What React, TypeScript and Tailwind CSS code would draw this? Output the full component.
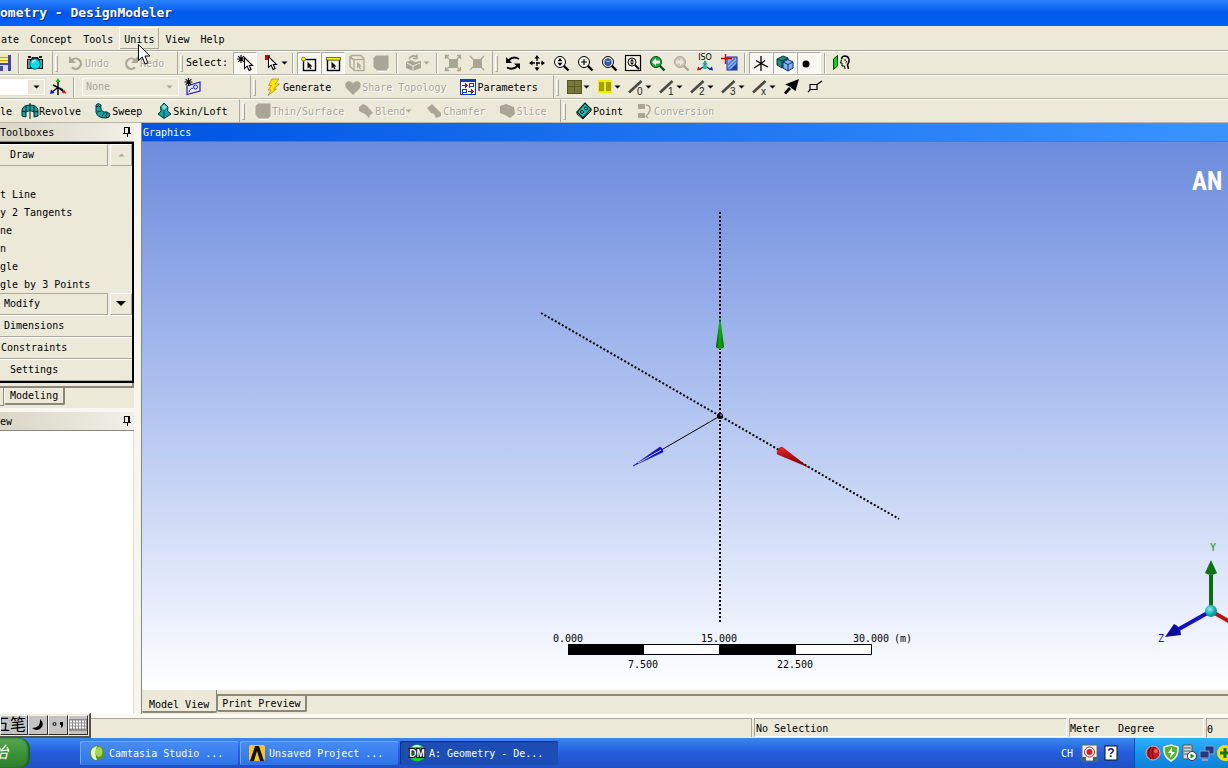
import React from "react";

const FONT = "font-['DejaVu_Sans_Mono','Noto_Sans_CJK_SC',monospace]";

/* ---------- icons (18 x 18 grid) ---------- */

function Svg({ children, crisp }: { children: React.ReactNode; crisp?: boolean }) {
  return (
    <svg
      className="h-[18px] w-[18px] shrink-0 overflow-visible"
      viewBox="0 0 18 18"
      fill="none"
      aria-hidden="true"
      shapeRendering={crisp ? "crispEdges" : "auto"}
    >
      {children}
    </svg>
  );
}

const Pointer = ({ x = 0, y = 0, s = 1 }: { x?: number; y?: number; s?: number }) => (
  <path
    transform={`translate(${x} ${y}) scale(${s})`}
    d="M0 0 L0 11 L2.6 8.6 L4.6 13 L6.6 12 L4.8 8 L8 8 Z"
    fill="#fff"
    stroke="#000"
    strokeWidth="1.1"
  />
);

const Save = () => (
  <Svg crisp>
    <path d="M1 1H17V17H3L1 15Z" fill="#4343a8" />
    <rect x="4" y="1" width="10" height="8" fill="#f5e9a0" />
    <path d="M4 3H14M4 6H14" stroke="#c8a000" />
    <rect x="5" y="11" width="9" height="6" fill="#d8d8ec" />
    <rect x="6" y="12" width="3" height="5" fill="#4343a8" />
  </Svg>
);
const Camera = () => (
  <Svg>
    <path d="M1 5H5L6 3H12L13 5H17V15H1Z" fill="#16181c" />
    <path d="M2 3h3M13 3h3" stroke="#16181c" strokeWidth="2" />
    <rect x="2" y="6" width="2" height="8" fill="#7d9598" />
    <rect x="14" y="6" width="2" height="8" fill="#7d9598" />
    <circle cx="9" cy="10" r="5.2" fill="#00e0ea" stroke="#046a70" />
    <path d="M6.5 9a3 3 0 0 1 3-2.5" stroke="#d8ffff" strokeWidth="1.3" />
  </Svg>
);
const Undo = () => (
  <Svg>
    <path d="M5 6a5.2 5.2 0 1 1 0 7.4" stroke="#a9a698" strokeWidth="2.2" />
    <path d="M2 2V9H9Z" fill="#a9a698" />
  </Svg>
);
const Redo = () => (
  <Svg>
    <path d="M13 6a5.2 5.2 0 1 0 0 7.4" stroke="#a9a698" strokeWidth="2.2" />
    <path d="M16 2V9H9Z" fill="#a9a698" />
  </Svg>
);
const NewSelect = () => (
  <Svg>
    <path d="M5 1V9M1 5H9M2.2 2.2L7.8 7.8M7.8 2.2L2.2 7.8" stroke="#000" strokeWidth="1.1" />
    <Pointer x={8.5} y={3.5} />
  </Svg>
);
const SelectMode = () => (
  <Svg>
    <rect x="2" y="1" width="5" height="5" fill="#d00010" />
    <Pointer x={5.5} y={2.5} />
  </Svg>
);
const FilterFrame = () => (
  <>
    <rect x="3.5" y="5.5" width="12" height="11" stroke="#000" strokeWidth="1.4" />
    <path d="M7.5 7.5v7l1.8-1.5 1 2.5 1.2-.6-1-2.3h2z" fill="#000" />
  </>
);
const FilterPoint = () => (
  <Svg>
    <FilterFrame />
    <circle cx="3.5" cy="5" r="2" fill="#f5f500" stroke="#777700" strokeWidth="0.8" />
  </Svg>
);
const FilterEdge = () => (
  <Svg>
    <FilterFrame />
    <rect x="2.5" y="3.5" width="14" height="2.6" fill="#f5f500" stroke="#555500" strokeWidth="0.8" />
  </Svg>
);
const FilterFace = () => (
  <Svg>
    <path d="M5.500 5.500L2 3V12.500L5.500 15.500M2 3L4 1.500H13L16 5" stroke="#aeab9c" strokeWidth="1.600" />
    <rect x="6" y="5.5" width="10" height="11" stroke="#aeab9c" strokeWidth="1.4" />
    <path d="M9 7.5v7l1.8-1.5 1 2.5 1.2-.6-1-2.3h2z" fill="#aeab9c" />
  </Svg>
);
const SolidBox = () => (
  <Svg>
    <path d="M1.5 4L4 1.5H16.5V14L14.5 16.5H5L1.5 13Z" fill="#a9a698" />
    <path d="M5 17.5H15L17.5 14.5" stroke="#fff" />
  </Svg>
);
const ExtendSel = () => (
  <Svg>
    <path d="M1 8L6 6L10 8L16 7V14L8 17L1 14Z" fill="#a9a698" />
    <path d="M2 9l6 3 7-3M8 12v5" stroke="#ece9d8" />
    <path d="M4 5Q7 0 12 3M12 .5v4h-4" stroke="#a9a698" strokeWidth="1.5" />
  </Svg>
);
const Expand = () => (
  <Svg>
    <rect x="5" y="5" width="9" height="9" fill="#a9a698" />
    <path d="M1.5 5V1.5H5M13 1.5H16.5V5M16.5 13V16.5H13M5 16.5H1.5V13M2 2l3 3M16 2l-3 3M2 16l3-3M16 16l-3-3" stroke="#a9a698" strokeWidth="1.3" />
  </Svg>
);
const Shrink = () => (
  <Svg>
    <rect x="5" y="5" width="9" height="9" fill="#a9a698" />
    <path d="M2 2l4 4M16 2l-4 4M2 16l4-4M16 16l-4-4" stroke="#a9a698" strokeWidth="1.3" />
  </Svg>
);
const Rotate = () => (
  <Svg>
    <path d="M4.500 6.500Q9 1.500 15 5M13.500 12Q9 16.500 3 13.500" stroke="#000" strokeWidth="1.900" />
    <path d="M2 3V9H8Z M16 15.500V9.500H10Z" fill="#000" />
  </Svg>
);
const Pan = () => (
  <Svg>
    <path d="M9 3V15M3 9H15" stroke="#000" strokeWidth="1.3" strokeDasharray="4 1" />
    <path d="M9 1L11.500 4.500H6.500ZM9 17L11.500 13.500H6.500ZM1 9L4.500 6.500V11.500ZM17 9L13.500 6.500V11.500Z" fill="#000" />
  </Svg>
);
const Lens = ({ children, color = "#f8f7f0", handle = "#000" }: { children?: React.ReactNode; color?: string; handle?: string }) => (
  <Svg>
    <path d="M11.500 11.500L16.500 16.500" stroke={handle} strokeWidth="2.4" />
    <circle cx="8" cy="8" r="5.500" fill={color} stroke={handle} strokeWidth="1" />
    {children}
  </Svg>
);
const ZoomDrag = () => (
  <Lens>
    <path d="M8 4L10.500 7.300H5.500ZM8 12L10.500 8.700H5.500Z" fill="#000" />
  </Lens>
);
const ZoomIn = () => (
  <Lens>
    <path d="M8 5V11M5 8H11" stroke="#000" strokeWidth="1.2" />
  </Lens>
);
const ZoomFit = () => (
  <Lens>
    <path d="M5 6L8 4.500L11 6V10L8 12L5 10Z" fill="#2c5cd0" stroke="#0a2470" strokeWidth="0.8" />
    <path d="M5.500 6.500l2.500 1.300 2.500-1.300" stroke="#9fc0ff" />
  </Lens>
);
const ZoomBox = () => (
  <Svg>
    <rect x="1.500" y="1.500" width="15" height="15" stroke="#000" strokeWidth="1.2" fill="#f4f2e6" />
    <circle cx="8" cy="8" r="4" stroke="#000" />
    <path d="M11 11l4 4" stroke="#000" strokeWidth="2" />
    <path d="M8 5l2 2.500H6zM8 11l2-2.500H6z" fill="#000" />
  </Svg>
);
const ZoomPrev = () => (
  <Lens color="#18a838" handle="#0a4a14">
    <path d="M4 8L8 4V6.500H12V9.500H8V12Z" fill="#fff" />
  </Lens>
);
const ZoomNext = () => (
  <Lens color="#c9c6b8" handle="#a9a698">
    <path d="M12 8L8 4V6.500H4V9.500H8V12Z" fill="#ece9d8" />
  </Lens>
);
const Iso = () => (
  <Svg>
    <text x="9" y="5.500" fontSize="8" textAnchor="middle" fill="#000" className="font-['DejaVu_Sans',sans-serif]">ISO</text>
    <path d="M9 7V12M9 12L4 15M9 12L14 15" stroke="#111" strokeWidth="1.2" />
    <path d="M9 6.500l3 4H6z" fill="#10b0a0" />
    <path d="M1 16.500l1-4 3.500 3z" fill="#d01020" />
    <path d="M17 16.500l-1-4-3.500 3z" fill="#1020d0" />
    <circle cx="9" cy="13" r="2.300" fill="#10c0c0" />
  </Svg>
);
const LookAt = () => (
  <Svg>
    <rect x="7" y="3" width="10" height="13" fill="#8db2f4" stroke="#12308c" />
    <path d="M10 16L17 9V16Z" fill="#1b3fb0" />
    <path d="M8 11l7-7M8 15L16 7" stroke="#4a74d8" strokeWidth="1.2" />
    <path d="M5.500 0V10M1 4.500H12" stroke="#c00010" strokeWidth="1.3" />
  </Svg>
);
const AxisView = () => (
  <Svg>
    <path d="M9 2V17M2 14L9 9.500L16 13M4 6.500l5 3 4-3" stroke="#000" strokeWidth="1.3" />
  </Svg>
);
const Cubes = () => (
  <Svg>
    <path d="M1 5L7 2L12 4V11L6 14L1 11Z" fill="#1c8f78" stroke="#063c34" />
    <path d="M1 5l5 2 6-3M6 7v7" stroke="#063c34" />
    <path d="M7 8L12 5.500L17 8V14L12 17L7 14Z" fill="#7fb2ee" stroke="#102c80" />
    <path d="M7 8l5 2.500L17 8M12 10.500V17" stroke="#102c80" />
  </Svg>
);
const Dot = () => (
  <Svg>
    <circle cx="6" cy="10" r="3.500" fill="#000" />
  </Svg>
);
const LookFace = () => (
  <Svg>
    <path d="M1.500 5L5.500 1.500V12L1.500 15.500Z" fill="#12d012" stroke="#064006" />
    <path d="M9.500 5Q10 2 13 2Q17.500 2.500 17 7.500L15.500 11L16.500 15" stroke="#000" strokeWidth="1.500" />
    <path d="M9.500 5.500L8.500 9H10V12H12.500L13 15M12 6h2M13.500 9q2-1 1-2" stroke="#000" />
  </Svg>
);
const AxisColor = () => (
  <Svg>
    <path d="M9 4V17M3 14L9 9.500L15 14M4 7l10 5" stroke="#000" strokeWidth="1.400" />
    <path d="M9 0l2.500 4H6.500z" fill="#00c020" />
    <path d="M1 16l1-4.500 3.500 3.500z" fill="#1010e0" />
    <path d="M17.500 15.500l-4.500-.5 2-3.500z" fill="#e01010" />
  </Svg>
);
const NewSketch = () => (
  <Svg>
    <path d="M3 8L16 4V13L3 16.500Z" stroke="#1a1ae0" strokeWidth="1.200" />
    <path d="M5 14c1-3 3-5 4-3" stroke="#1a1ae0" />
    <circle cx="11.500" cy="9" r="2" stroke="#1a1ae0" />
    <path d="M4.500 0V8M.5 4H8.500M1.700 1.200L7.300 6.800M7.300 1.200L1.700 6.800" stroke="#000" strokeWidth="1.100" />
  </Svg>
);
const Bolt = () => (
  <Svg>
    <path d="M7 1H14L10 6H14.500L8.500 11H11.500L3 17.500L6 12H3L6.500 7.500H3.500Z" fill="#ffe600" stroke="#a88a00" strokeWidth="0.700" />
  </Svg>
);
const Heart = () => (
  <Svg>
    <path d="M9 17L2 10Q0 5 3.500 3.500Q7 2.500 9 5.500Q11 2.500 14.500 3.500Q18 5 16 10Z" fill="#a9a698" />
  </Svg>
);
const ParamIcon = () => (
  <Svg crisp>
    <rect x="1.500" y="1.500" width="15" height="15" fill="#fff" stroke="#0c3cc0" />
    <rect x="1" y="1" width="16" height="3" fill="#0c3cc0" />
    <path d="M3 7.500H8M6 5.500L8 7.500L6 9.500M9 13.500H14M12 11.500L14 13.500L12 15.500" stroke="#d00010" />
    <path d="M10.500 10V5.500H14V8H10.500M3.500 16V11.500H7V14H3.500" stroke="#0c3cc0" />
  </Svg>
);
const PlaneOlive = () => (
  <Svg crisp>
    <rect x="2" y="2" width="14" height="13" fill="#77773a" stroke="#55552a" />
    <path d="M9.500 2V15M2 8.500H16" stroke="#5c5c28" />
  </Svg>
);
const PlaneYellow = () => (
  <Svg crisp>
    <rect x="2" y="2" width="14" height="13" fill="#f0ee00" />
    <rect x="3" y="4" width="5" height="9" fill="#a0a000" />
    <rect x="10" y="4" width="5" height="9" fill="#a0a000" />
  </Svg>
);
const Slash = ({ d }: { d: string }) => (
  <Svg>
    <path d="M2 14.500L14.500 3" stroke="#4a4a44" strokeWidth="2.600" />
    <text x="10" y="17" fontSize="10" fill="#222" className="font-['Liberation_Sans',sans-serif]">{d}</text>
  </Svg>
);
const Arrow = () => (
  <Svg>
    <path d="M3 15.500L8 10" stroke="#000" strokeWidth="2.800" />
    <path d="M17 1L13.500 13L10 10.500L7.500 8.500L3 6.500Z" fill="#000" />
  </Svg>
);
const Corner = () => (
  <Svg>
    <path d="M4 12.500V6.500H11V11.500H4M11 6.500L16 3M4 12L2 14" stroke="#000" strokeWidth="1.200" />
  </Svg>
);
const Revolve = () => (
  <Svg>
    <path d="M1 14V8Q2 3 9 3Q16 3 17 8V14L13 15V10Q9 7 5 10V15Z" fill="#17a3a3" stroke="#033" />
    <path d="M9 1V17M5 10V4M13 10V4M1 9l4 1M17 9l-4 1" stroke="#022" />
  </Svg>
);
const SweepIcon = () => (
  <Svg>
    <path d="M2 3Q4 0 7 3Q6 9 10 10Q13 9 16 12Q16 16 12 16Q3 16 2 10Z" fill="#17a3a3" stroke="#033" />
    <path d="M2 5q3-2 4 0M3 10l4-1M8 14l2-3M13 11q-2 3 0 5" stroke="#022" />
  </Svg>
);
const Skin = () => (
  <Svg>
    <path d="M9 1L13 5L12.500 9L16 12L9 16.500L3 12L6 9L5.500 5Z" fill="#17a3a3" stroke="#033" />
    <path d="M9 8V16" stroke="#055" />
    <path d="M9 2.500L12 5L9 8L6.500 5Z" fill="#7fe0d8" />
  </Svg>
);
const Chunk = () => (
  <Svg>
    <path d="M2 5L6 2L10 4L16 11L13 13L12 16L8 12L2 9Z" fill="#a9a698" />
  </Svg>
);
const Wedge = () => (
  <Svg>
    <path d="M2 6L7 2L16 11V14L11 16L9 12L6 11Z" fill="#a9a698" />
  </Svg>
);
const SliceIcon = () => (
  <Svg>
    <path d="M1 4L7 2L15 5L16 12L11 16L6 13L1 11Z" fill="#a9a698" />
  </Svg>
);
const PointIcon = () => (
  <Svg>
    <path d="M2 10L10 1L16 7L8 16Z" fill="#16c0b8" stroke="#022" strokeWidth="1.200" />
    <path d="M2 10v2l6 5 8-8V7" stroke="#022" />
    <circle cx="7" cy="10" r="1.500" stroke="#022" />
    <circle cx="11" cy="6.500" r="1.500" stroke="#022" />
  </Svg>
);
const Convert = () => (
  <Svg>
    <path d="M2 2H9V7H2ZM2 11H9V16H2Z" fill="#a9a698" />
    <path d="M10 3Q15 4 14 8T10 14M12 12l-2 2 2 2" stroke="#a9a698" strokeWidth="1.400" />
  </Svg>
);
const Pin = () => (
  <svg className="h-[10px] w-[8px] shrink-0" viewBox="0 0 8 10" fill="none" aria-hidden="true" shapeRendering="crispEdges">
    <path d="M1.500 6V.5H6.500V6M5.500 1V6M0 6.500H8M4 7V10" stroke="#000" />
  </svg>
);
const Caret = ({ dim }: { dim?: boolean }) => (
  <svg className="h-[4px] w-[7px] shrink-0" viewBox="0 0 7 4" aria-hidden="true">
    <path d="M.5 .5H6.500L3.500 3.500Z" fill={dim ? "#a9a698" : "#000"} />
  </svg>
);

/* ---------- toolbar parts ---------- */

function Band({ children, className = "", first }: { children: React.ReactNode; className?: string; first?: boolean }) {
  return (
    <div className={`flex h-full shrink-0 items-center border-y border-t-white border-b-[#b9b6a5] ${className}`}>
      {!first && <span className="mr-[3px] ml-[2px] h-[17px] w-[3px] border border-t-white border-r-[#aca899] border-b-[#aca899] border-l-white" />}
      {children}
    </div>
  );
}
const END = "border-r border-r-[#aca899]";
const Sep = () => (
  <span className="flex h-[20px] w-2 shrink-0 justify-center">
    <span className="w-[2px] border-r border-l border-r-white border-l-[#aca899]" />
  </span>
);

type BtnProps = { icon: React.ReactNode; name?: string; label?: string; off?: boolean; on?: boolean; menu?: boolean; className?: string };
function Btn({ icon, name, label, off, on, menu, className = "" }: BtnProps) {
  const size = label ? "mr-px px-1.5" : menu ? "" : "w-6 justify-center";
  return (
    <button
      type="button"
      aria-label={label ?? name}
      disabled={off}
      className={`flex h-[22px] shrink-0 items-center ${size} ${
        on ? "border border-t-[#aca899] border-r-white border-b-white border-l-[#aca899] bg-[#f8f7f1]" : ""
      } ${off ? "text-[#a9a698] [text-shadow:1px_1px_0_#fff]" : ""} ${className}`}
    >
      {icon}
      {label && <span className="pt-0.5">{label}</span>}
      {menu && <Caret dim={off} />}
    </button>
  );
}

function SideButton({ label, pad }: { label: string; pad: string }) {
  return (
    <button type="button" className={`flex h-[22px] w-full items-center border-t border-b border-t-white border-b-[#aca899] ${pad}`}>
      {label}
    </button>
  );
}

function PanelHead({ title }: { title: string }) {
  return (
    <div className="flex h-[19px] shrink-0 items-center justify-between overflow-hidden border-b border-[#8a887a] bg-gradient-to-r from-[#d9d6c6] to-[#f1f0e8] pr-[3px]">
      <h2 className="pt-0.5">{title}</h2>
      <button type="button" aria-label={`Pin ${title}`}>
        <Pin />
      </button>
    </div>
  );
}

/* ---------- graphics view ---------- */

function Scene() {
  return (
    <svg className="absolute inset-0 h-full w-full" role="img" aria-label="Coordinate axes">
      <defs>
        <linearGradient id="g"><stop offset="0" stopColor="#004a00" /><stop offset=".5" stopColor="#06b806" /><stop offset="1" stopColor="#005a00" /></linearGradient>
        <linearGradient id="r" x2="0" y2="1"><stop offset="0" stopColor="#f02020" /><stop offset="1" stopColor="#700000" /></linearGradient>
        <radialGradient id="t" cx=".4" cy=".35"><stop offset="0" stopColor="#7ff0ee" /><stop offset="1" stopColor="#0a9ca4" /></radialGradient>
      </defs>
      <g transform="translate(578 274)">
        <path d="M0 -204V206" stroke="#000" strokeWidth="2" strokeDasharray="2 2" />
        <path d="M-179 -103L179 103" stroke="#000" strokeWidth="2" strokeDasharray="2 2" />
        <path d="M0 0L-57 33" stroke="#000" />
        <path d="M0 -100L4 -69Q0 -65 -4 -69Z" fill="url(#g)" />
        <path d="M88 51L62 31Q57 32 57 38Z" fill="url(#r)" stroke="#800" strokeWidth=".5" />
        <path d="M-87 50L-60 31Q-57 32 -57 36Z" fill="#1010d8" stroke="#0000a0" strokeWidth=".5" />
        <path d="M-82 47L-59 34" stroke="#c8d0ff" />
        <circle r="3" fill="#000" />
        <circle cx="1" cy="-1" r="1" fill="#7889b8" />
      </g>
      <g transform="translate(426 502)" fontSize="10" fill="#000">
        <rect x=".5" y=".5" width="303" height="10" fill="#fff" stroke="#000" />
        <rect width="76" height="11" />
        <rect x="151" width="77" height="11" />
        <text x="-15" y="-2">0.000</text>
        <text x="133" y="-2">15.000</text>
        <text x="285" y="-2">30.000</text>
        <text x="326" y="-2">(m)</text>
        <text x="60" y="24">7.500</text>
        <text x="209" y="24">22.500</text>
      </g>
      <g transform="translate(1069 469)" fontSize="10">
        <path d="M0 0V-36" stroke="#0b6a12" strokeWidth="4" />
        <path d="M0 -51L6 -38Q0 -34 -6 -38Z" fill="#0a7414" />
        <path d="M0 0L-32 18" stroke="#1212c0" strokeWidth="4" />
        <path d="M-46 26L-37 13Q-30 16 -30 24Z" fill="#0c0ca0" />
        <path d="M0 0L40 23" stroke="#c01010" strokeWidth="4" />
        <circle r="6" fill="url(#t)" />
        <text x="-1" y="-60" fill="#00a010">Y</text>
        <text x="-53" y="31" fill="#1010e0">Z</text>
      </g>
      <text x="1050" y="48" fontSize="25" fill="#fff" className="font-['Liberation_Sans_Narrow','Roboto_Condensed',Roboto,sans-serif] font-bold">AN</text>
    </svg>
  );
}

/* ---------- task bar ---------- */

function Task({ icon, label, active }: { icon: React.ReactNode; label: string; active?: boolean }) {
  return (
    <button
      type="button"
      className={`flex h-[24px] w-[158px] items-center gap-[3px] rounded-[2px] pl-2 text-left ${
        active
          ? "bg-[#1c4db4] shadow-[inset_1px_1px_1px_#0f2f80]"
          : "bg-gradient-to-b from-[#4a8df5] via-[#3a7ff0] to-[#3072e4] shadow-[inset_1px_1px_0_#6fa8ff]"
      }`}
    >
      {icon}
      <span className="pt-0.5">{label}</span>
    </button>
  );
}

const Camtasia = () => (
  <Svg>
    <circle cx="9" cy="9" r="7.500" fill="#57941c" />
    <path d="M9 2Q2 4 3 10T9 16Q6 9 9 2Z" fill="#e8f5c8" />
    <ellipse cx="11" cy="8" rx="3.500" ry="5" fill="#a4d84c" />
  </Svg>
);
const Ansys = () => (
  <Svg>
    <rect x="1" y="1" width="16" height="16" rx="2" fill="#ffc61a" />
    <path d="M2 17L7 2H11L16 17H12L9 7L6 17Z" fill="#111" />
  </Svg>
);
const Dm = () => (
  <Svg>
    <circle cx="9" cy="9" r="8.500" fill="#0fd41b" />
    <path d="M4 3Q9 -1 14 3Z" fill="#d9ffd9" />
    <text x="9" y="13" fontSize="10" textAnchor="middle" fill="#fff" stroke="#000" strokeWidth="2" paintOrder="stroke" className="font-['Liberation_Sans',sans-serif] font-bold">DM</text>
  </Svg>
);
const RedBall = () => (
  <Svg>
    <circle cx="9" cy="9" r="7" fill="#c81c24" stroke="#e8c8c8" strokeWidth=".8" />
    <path d="M7 3Q2 9 7 15M10 3Q6 9 10 15" stroke="#701016" strokeWidth="1.200" />
    <circle cx="12" cy="7" r="2" fill="#e86068" />
  </Svg>
);
const Shield = () => (
  <Svg>
    <path d="M2 3L9 1L16 3Q17 13 9 17Q1 13 2 3Z" fill="#5bb02c" stroke="#f0f8d8" strokeWidth="1.500" />
    <path d="M10 3L6 9H9L8 14L13 8H10Z" fill="#fff" />
  </Svg>
);
const Server = () => (
  <Svg>
    <path d="M3 1H12V15H3Z" fill="#d8d8d0" stroke="#555" />
    <path d="M4 4h7M4 7h7M4 10h7" stroke="#555" />
    <circle cx="12" cy="12" r="4.500" fill="#fff" stroke="#333" />
    <path d="M10.500 9.500L14.500 12L10.500 14.500Z" fill="#0a8c1c" />
  </Svg>
);
const Network = () => (
  <Svg>
    <rect x="7" y="2" width="9" height="8" fill="#27397c" stroke="#8a9cd0" />
    <rect x="2" y="7" width="9" height="7" fill="#27397c" stroke="#8a9cd0" />
    <path d="M4 16h6" stroke="#8a9cd0" strokeWidth="2" />
  </Svg>
);
const Plus = () => (
  <Svg>
    <circle cx="9" cy="9" r="8" fill="#f4dc10" />
    <path d="M9 4V14M4 9H14" stroke="#0a7c14" strokeWidth="3" />
  </Svg>
);
const Recorder = () => (
  <Svg>
    <rect x="2" y="1" width="15" height="16" fill="#f4f0e8" stroke="#587078" />
    <path d="M2 13H6V17H2ZM13 13H17V17H13Z" fill="#48606c" />
    <circle cx="9.500" cy="8" r="5" fill="#fff" stroke="#a03030" />
    <circle cx="9.500" cy="8" r="3" fill="#e01818" />
  </Svg>
);
const Help = () => (
  <Svg>
    <rect x="3" y="2" width="12" height="14" fill="#fff" stroke="#111" />
    <text x="9" y="13" fontSize="12" textAnchor="middle" fill="#1a1a70" className="font-['Liberation_Sans',sans-serif] font-bold">?</text>
  </Svg>
);

const IME = "flex h-[20px] items-center justify-center border border-t-[#f4f4f4] border-r-[#303030] border-b-[#303030] border-l-[#f4f4f4] bg-[#c3c3c3]";

export default function App() {
  return (
    <div className={`relative flex h-screen flex-col overflow-hidden bg-[#ece9d8] text-[10px] leading-[12px] text-black ${FONT}`}>
      <header className="flex h-[26px] shrink-0 items-center overflow-hidden bg-gradient-to-b from-[#2a82ff] via-[#0058ea] to-[#0062f8]">
        <h1 className="text-[13px] leading-[16px] font-bold whitespace-pre text-white [text-shadow:1px_1px_0_#0a2a80]">ometry - DesignModeler</h1>
      </header>

      <nav className="flex h-[25px] shrink-0 items-center gap-px border-b border-[#aca899]">
        {["ate", "Concept", "Tools", "Units", "View", "Help"].map((m, i) => (
          <button
            key={m}
            type="button"
            className={`h-[22px] pt-[3px] pr-[5px] ${i === 0 ? "pl-px" : "pl-[5px]"} ${
              m === "Units" ? "shadow-[inset_1px_1px_0_#fff,inset_-1px_-1px_0_#aca899]" : ""
            }`}
          >
            {m}
          </button>
        ))}
      </nav>

      <div className="flex h-6 shrink-0" role="toolbar" aria-label="Main">
        <Band first className={`w-[53px] ${END}`}>
          <Btn icon={<Save />} name="Save" className="w-[15px] justify-end overflow-hidden pr-[3px]" />
          <Sep />
          <Btn icon={<Camera />} name="Image capture" />
        </Band>
        <Band className={`w-[125px] ${END}`}>
          <Btn icon={<Undo />} label="Undo" off />
          <Btn icon={<Redo />} label="Redo" off />
        </Band>
        <Band className={`w-[315px] ${END}`}>
          <span className="mr-[5px]">Select:</span>
          <Btn icon={<NewSelect />} name="New selection" on />
          <Btn icon={<SelectMode />} name="Select mode" menu className="ml-1 w-7 justify-center" />
          <Sep />
          <Btn icon={<FilterPoint />} name="Points" on />
          <Btn icon={<FilterEdge />} name="Edges" on />
          <Btn icon={<FilterFace />} name="Faces" off />
          <Btn icon={<SolidBox />} name="Bodies" off />
          <Sep />
          <Btn icon={<ExtendSel />} name="Extend selection" off menu className="w-8 justify-center" />
          <Sep />
          <Btn icon={<Expand />} name="Expand" off />
          <Btn icon={<Shrink />} name="Shrink" off />
        </Band>
        <Band className="grow">
          <Btn icon={<Rotate />} name="Rotate" />
          <Btn icon={<Pan />} name="Pan" />
          <Btn icon={<ZoomDrag />} name="Zoom" />
          <Btn icon={<ZoomIn />} name="Box zoom" />
          <Btn icon={<ZoomFit />} name="Zoom to fit" />
          <Btn icon={<ZoomBox />} name="Magnifier" />
          <Btn icon={<ZoomPrev />} name="Previous view" />
          <Btn icon={<ZoomNext />} name="Next view" off />
          <Btn icon={<Iso />} name="Isometric view" />
          <Btn icon={<LookAt />} name="New plane view" />
          <Sep />
          <Btn icon={<AxisView />} name="Display plane" on />
          <Btn icon={<Cubes />} name="Display model" on />
          <Btn icon={<Dot />} name="Display points" on />
          <Sep />
          <Btn icon={<LookFace />} name="Look at" />
        </Band>
      </div>

      <div className="flex h-6 shrink-0" role="toolbar" aria-label="Sketch">
        <Band first className={`w-[251px] ${END}`}>
          <div className="relative flex w-[46px] items-center">
            <select aria-label="Plane" className="h-[18px] w-full appearance-none border-y border-r border-[#e2dfce] bg-white">
              <option></option>
            </select>
            <span className="pointer-events-none absolute right-0.5 flex h-[14px] w-4 items-center justify-center bg-[#ece9d8]">
              <Caret />
            </span>
          </div>
          <Btn icon={<AxisColor />} name="New plane" />
          <Sep />
          <div className="relative ml-1 flex w-[97px] items-center">
            <select aria-label="Sketch" disabled className="h-[18px] w-full appearance-none border border-[#faf9f4] bg-[#ece9d8] px-[3px] text-[#a9a698] opacity-100">
              <option>None</option>
            </select>
            <span className="pointer-events-none absolute right-1.5 flex">
              <Caret dim />
            </span>
          </div>
          <Btn icon={<NewSketch />} name="New sketch" className="ml-0.5" />
        </Band>
        <Band className={`w-[303px] ${END}`}>
          <Btn icon={<Bolt />} label="Generate" />
          <Btn icon={<Heart />} label="Share Topology" off />
          <Btn icon={<ParamIcon />} label="Parameters" />
        </Band>
        <Band className="grow">
          {[<PlaneOlive />, <PlaneYellow />, <Slash d="0" />, <Slash d="1" />, <Slash d="2" />, <Slash d="3" />, <Slash d="x" />].map((ic, i) => (
            <Btn key={i} icon={ic} name={`Edge style ${i + 1}`} menu className="w-[31px] justify-center" />
          ))}
          <Btn icon={<Arrow />} name="Edge direction" />
          <Btn icon={<Corner />} name="Show vertices" />
        </Band>
      </div>

      <div className="flex h-6 shrink-0" role="toolbar" aria-label="Features">
        <Band first className={`w-[240px] ${END}`}>
          <button type="button" className="mr-[2px] w-[13px] pt-0.5 text-left">le</button>
          <Btn icon={<Revolve />} label="Revolve" />
          <Btn icon={<SweepIcon />} label="Sweep" />
          <Btn icon={<Skin />} label="Skin/Loft" />
        </Band>
        <Band className={`w-[321px] ${END}`}>
          <Btn icon={<SolidBox />} label="Thin/Surface" off />
          <Btn icon={<Chunk />} label="Blend" off menu />
          <Btn icon={<Wedge />} label="Chamfer" off />
          <Btn icon={<SliceIcon />} label="Slice" off />
        </Band>
        <Band className="grow">
          <Btn icon={<PointIcon />} label="Point" />
          <Btn icon={<Convert />} label="Conversion" off />
        </Band>
      </div>

      <main className="flex min-h-0 grow bg-[#f6f5ee]">
        <aside className="flex w-[134px] shrink-0 flex-col bg-[#ece9d8]">
          <PanelHead title="Toolboxes" />
          <div className="border-t-2 border-r-2 border-b-2 border-black">
            <div className="flex h-[22px]">
              <button type="button" className="grow border-t border-r border-b border-t-white border-r-[#aca899] border-b-[#aca899] pl-[10px] text-left">Draw</button>
              <button type="button" aria-label="Scroll up" className="ml-0.5 flex w-[22px] items-center justify-center border border-t-white border-r-[#aca899] border-b-[#aca899] border-l-white">
                <span className="rotate-180"><Caret dim /></span>
              </button>
            </div>
            <ul className="h-[127px] pt-[2px] leading-[18px] whitespace-pre">
              <li className="h-[18px]"></li>
              {["t Line", "y 2 Tangents", "ne", "n", "gle", "gle by 3 Points"].map((t) => (
                <li key={t}>{t}</li>
              ))}
            </ul>
            <div className="flex h-[22px]">
              <button type="button" className="grow border-t border-r border-b border-t-[#aca899] border-r-[#aca899] border-b-[#aca899] pl-1 text-left">Modify</button>
              <button type="button" aria-label="Scroll down" className="ml-0.5 flex w-[22px] items-center justify-center border border-t-white border-r-[#aca899] border-b-[#aca899] border-l-white">
                <svg className="h-[6px] w-[10px]" viewBox="0 0 10 6" aria-hidden="true"><path d="M0 0H10L5 5Z" /></svg>
              </button>
            </div>
            <SideButton label="Dimensions" pad="pl-1" />
            <SideButton label="Constraints" pad="pl-px" />
            <SideButton label="Settings" pad="pl-[10px]" />
          </div>
          <div className="h-[5px] shrink-0 border-r-2 border-b-2 border-[#8a887a]" />
          <div className="flex h-[24px] shrink-0 items-start border-b-4 border-[#f8f7f1]">
            <span className="h-[18px] w-1 border-r border-b border-[#8a887a]" />
            <button type="button" className="h-[17px] rounded-b-[2px] border-r-2 border-b-2 border-l border-[#8a887a] border-l-white px-[5px]">Modeling</button>
          </div>
          <PanelHead title="ew" />
          <div className="grow border-r border-[#e2dfce] bg-white" />
        </aside>

        <section className="ml-[7px] flex min-w-0 grow flex-col border-l border-[#8a887a] bg-white">
          <h2 className="flex h-[18px] shrink-0 items-center bg-gradient-to-r from-[#0054e3] to-[#3a94ff] pt-0.5 pl-px text-white">Graphics</h2>
          <div className="relative min-h-0 grow overflow-hidden border-t border-[#77756a] bg-gradient-to-b from-[#6d8bdd] to-white">
            <Scene />
          </div>
          <div className="flex h-[24px] shrink-0 items-start bg-[#ece9d8]">
            <button type="button" className="flex h-[23px] items-center rounded-b-[2px] border-r border-b-2 border-[#8a887a] px-[7px] pt-[8px]">Model View</button>
            <div className="mt-[4px] flex h-[18px] grow border-t-2 border-[#8a887a]">
              <button type="button" className="h-[16px] rounded-b-[2px] border-r-2 border-b-2 border-l border-[#8a887a] px-[4px] pt-px whitespace-nowrap">Print Preview</button>
            </div>
          </div>
        </section>
      </main>

      <footer className="flex h-[24px] shrink-0 border-t-4 border-[#faf9f4] pb-px">
        <div className="min-w-0 grow border-t border-r border-t-[#aca899] border-r-[#aca899]" />
        <div className="ml-0.5 flex w-[313px] items-center border border-t-[#aca899] border-r-white border-b-white border-l-[#aca899] pt-[3px] pl-px">No Selection</div>
        <div className="ml-0.5 flex w-[135px] items-center gap-[18px] border border-t-[#aca899] border-r-white border-b-white border-l-[#aca899] pt-[3px]">
          <span>Meter</span>
          <span>Degree</span>
        </div>
        <div className="ml-0.5 flex w-[22px] items-center border-t border-l border-[#aca899] pt-[3px]">0</div>
      </footer>

      <footer className="flex h-[30px] shrink-0 items-center bg-gradient-to-b from-[#3c86f0] via-[#245cdc] to-[#1f50c4] text-white">
        <button type="button" className="mr-[50px] flex h-full w-[30px] items-center overflow-hidden rounded-r-[10px] bg-gradient-to-b from-[#56a850] via-[#3a9438] to-[#2e7d2c] text-[16px] italic shadow-[inset_-2px_0_2px_#1e5c1c]">
          <span className="-ml-2">始</span>
        </button>
        <div className="flex gap-0.5">
          <Task icon={<Camtasia />} label="Camtasia Studio ..." />
          <Task icon={<Ansys />} label="Unsaved Project ..." />
          <Task icon={<Dm />} label="A: Geometry - De..." active />
        </div>
        <div className="ml-auto flex items-center gap-[4px] pr-[14px]">
          <span className="mr-[3px] pt-0.5">CH</span>
          <Recorder />
          <Help />
        </div>
        <div className="flex h-full w-[94px] items-center overflow-hidden border-l border-[#0c50b0] bg-gradient-to-b from-[#2cb4f8] via-[#1296ee] to-[#1080d8] pl-[9px]">
          <RedBall />
          <Shield />
          <Server />
          <Network />
          <Plus />
        </div>
      </footer>

      <div className="absolute bottom-[30px] left-0 flex h-[25px] items-center border-t border-r-2 border-b-2 border-t-white border-r-[#55544c] border-b-[#55544c] bg-[#ece9d8] pr-px" aria-label="Input method">
        <button type="button" className={`${IME} w-[28px] overflow-hidden text-[16px]`}>
          <span className="-ml-2 whitespace-nowrap">五笔</span>
        </button>
        <button type="button" aria-label="Half width" className={`${IME} w-5`}>
          <svg className="h-[12px] w-[12px]" viewBox="0 0 12 12" aria-hidden="true"><path d="M8 0Q13 5 9 9T0 9Q9 9 8 0Z" /></svg>
        </button>
        <button type="button" aria-label="Punctuation" className={`${IME} w-5`}>
          <svg className="h-[8px] w-[12px]" viewBox="0 0 12 8" aria-hidden="true"><circle cx="2.500" cy="3" r="1.500" fill="none" stroke="#000" /><path d="M8 1h3v4L9 7V4H8z" /></svg>
        </button>
        <button type="button" aria-label="Keyboard" className={`${IME} w-5`}>
          <svg className="h-[12px] w-[18px]" viewBox="0 0 18 12" aria-hidden="true"><rect width="18" height="12" fill="#8c8c8c" /><path d="M1 2.500H17M1 5.500H17M1 8.500H17" stroke="#fff" strokeWidth="2" strokeDasharray="2 1" /></svg>
        </button>
      </div>

      <svg className="pointer-events-none absolute top-[44px] left-[138px] h-[21px] w-[13px]" viewBox="0 0 13 21" aria-hidden="true">
        <path d="M.5 .5V16.500L4.300 13L7 20L9.800 18.800L7 12H12Z" fill="#fff" stroke="#000" />
      </svg>
    </div>
  );
}
